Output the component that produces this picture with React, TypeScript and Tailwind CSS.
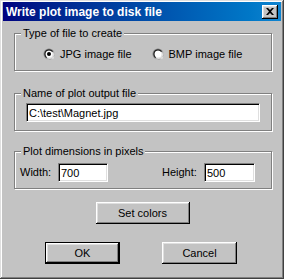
import { ReactNode } from "react";

const raised =
  "shadow-[inset_-1px_-1px_#000,inset_1px_1px_#fff,inset_-2px_-2px_#808080,inset_2px_2px_#dfdfdf]";

function Radio({ checked, label }: { checked?: boolean; label: string }) {
  return (
    <label className="flex items-center gap-[5px]">
      <svg width="12" height="12" viewBox="0 0 12 12" className="shrink-0">
        <circle cx="6" cy="6" r="5.5" fill="#808080" />
        <path d="M10.5 3 A5.5 5.5 0 0 1 3 10.5 L10.5 10.5 Z" fill="#fff" />
        <circle cx="6" cy="6" r="4.5" fill="#000" />
        <path d="M9.8 3.4 A4.5 4.5 0 0 1 3.4 9.8 Z" fill="#dfdfdf" />
        <circle cx="6" cy="6" r="3.5" fill="#fff" />
        {checked && <circle cx="6" cy="6" r="2" fill="#000" />}
      </svg>
      <span>{label}</span>
    </label>
  );
}

function Group({
  title,
  className,
  children,
}: {
  title: string;
  className: string;
  children: ReactNode;
}) {
  return (
    <fieldset
      className={`mx-[11px] w-[258px] h-[44px] border border-[#808080] shadow-[inset_1px_1px_#fff,1px_1px_#fff] ${className}`}
    >
      <legend className="ml-[6px] px-[2px] leading-[13px] bg-[#c3c3c3]">
        {title}
      </legend>
      {children}
    </fieldset>
  );
}

function TextBox({ value, className }: { value: string; className: string }) {
  return (
    <input
      readOnly
      value={value}
      className={`h-[19px] bg-white px-[2px] text-[11px] leading-[13px] outline-none border border-t-[#808080] border-l-[#808080] border-b-white border-r-white shadow-[inset_1px_1px_#000,inset_-1px_-1px_#dfdfdf] ${className}`}
    />
  );
}

function Button({
  children,
  isDefault,
  className,
}: {
  children: ReactNode;
  isDefault?: boolean;
  className: string;
}) {
  return (
    <button
      className={`h-[22px] bg-[#c3c3c3] text-[11px] ${
        isDefault ? "border border-black" : ""
      } ${className}`}
    >
      <div className={`h-full w-full flex items-center justify-center ${raised}`}>
        {children}
      </div>
    </button>
  );
}

export default function App() {
  return (
    <div className="w-[284px] h-[279px] bg-[#c3c3c3] pt-[2px] px-[3px] pb-[3px] flex flex-col text-[11px] text-black font-['Liberation_Sans',Arial,sans-serif] shadow-[inset_-1px_-1px_#404040,inset_1px_1px_#dfdfdf,inset_-2px_-2px_#808080,inset_2px_2px_#fff]">
      {/* Title bar */}
      <div className="h-[19px] flex items-center justify-between bg-gradient-to-r from-[#000080] to-[#1084d0] pl-[3px] pr-[3px]">
        <span className="text-white font-bold text-[12px] leading-none">
          Write plot image to disk file
        </span>
        <div className={`w-[16px] h-[14px] bg-[#c3c3c3] flex items-center justify-center ${raised}`}>
          <svg width="8" height="7" viewBox="0 0 8 7" className="mb-[1px]">
            <path
              d="M0 0h2l2 2 2-2h2L5 3.5 8 7H6L4 5 2 7H0l3-3.5z"
              fill="#000"
            />
          </svg>
        </div>
      </div>

      <Group title="Type of file to create" className="mt-[6px]">
        <div className="flex items-center pt-[7px] pl-[28px] h-[21px]">
          <Radio checked label="JPG image file" />
          <div className="ml-[20px]">
            <Radio label="BMP image file" />
          </div>
        </div>
      </Group>

      <Group title="Name of plot output file" className="mt-[16px]">
        <div className="pt-[3px] pl-[11px]">
          <TextBox value="C:\test\Magnet.jpg" className="w-[234px]" />
        </div>
      </Group>

      <Group title="Plot dimensions in pixels" className="mt-[14px]">
        <div className="flex items-center pt-[5px] pl-[5px]">
          <span className="w-[38px]">Width:</span>
          <TextBox value="700" className="w-[50px]" />
          <span className="ml-[54px] w-[42px]">Height:</span>
          <TextBox value="500" className="w-[51px]" />
        </div>
      </Group>

      <div className="flex justify-center mt-[13px] pl-[1px]">
        <Button className="w-[94px]">Set colors</Button>
      </div>

      <div className="flex mt-[18px] pl-[42px]">
        <Button isDefault className="w-[75px]">
          OK
        </Button>
        <Button className="w-[75px] ml-[42px]">Cancel</Button>
      </div>
    </div>
  );
}
